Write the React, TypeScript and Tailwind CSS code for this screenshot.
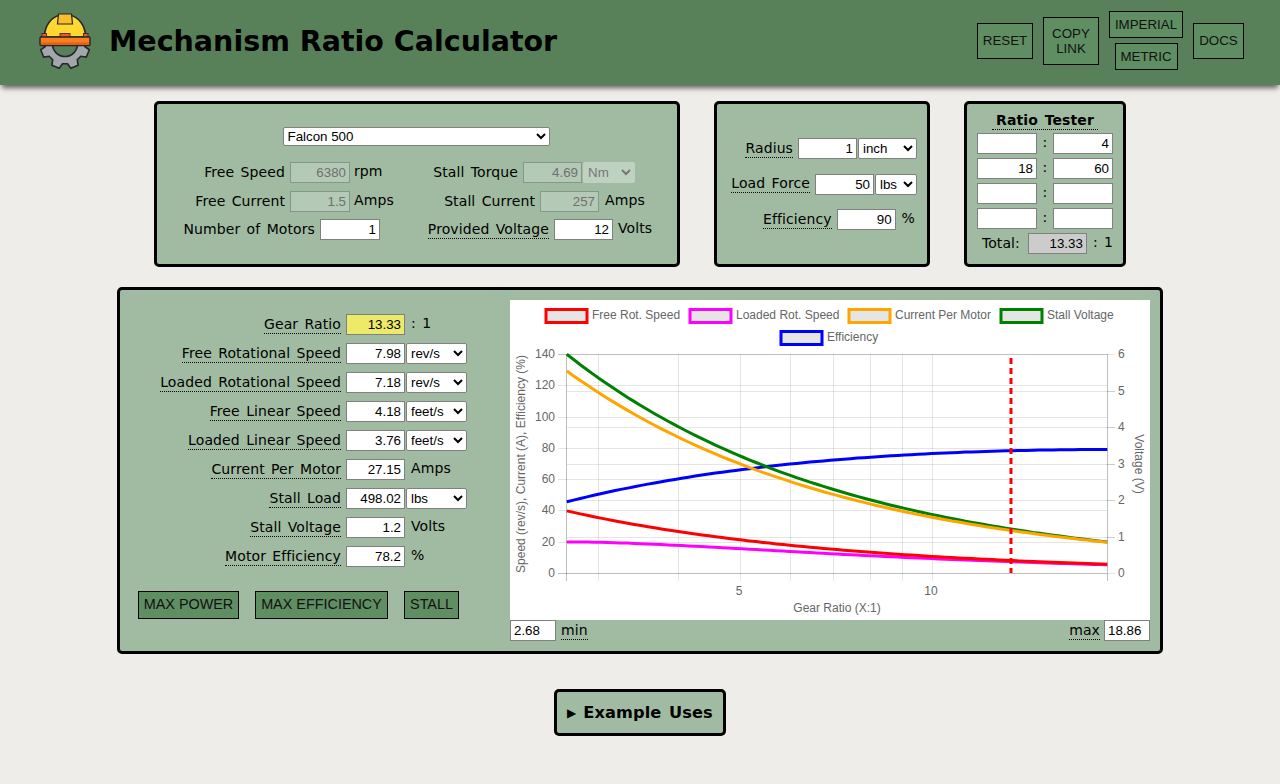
import React from "react";

const inputBase =
  "h-[21px] border border-[#808080] px-[3px] text-right font-['Liberation_Sans',Arial,sans-serif] text-[13.33px] text-black outline-none [word-spacing:0px] tracking-normal";
const selectBase =
  "h-[21px] rounded-[2px] border border-[#808080] bg-white font-['Liberation_Sans',Arial,sans-serif] text-[13.33px] text-black [word-spacing:0px] tracking-normal";
const panel = "rounded-[5px] border-[3px] border-black bg-[#a0bba2]";

function Num({ value = "", className = "w-[59px] bg-white" }: { value?: string; className?: string }) {
  return <input readOnly value={value} className={`${inputBase} ${className}`} />;
}
function Dis({ value, className = "w-[60px]" }: { value: string; className?: string }) {
  return (
    <input
      disabled
      value={value}
      className={`${inputBase} ${className} !border-[#84988a] bg-[#b4c9b6] !text-[#707070]`}
    />
  );
}
function Sel({ value, className }: { value: string; className: string }) {
  return (
    <select defaultValue={value} className={`${selectBase} ${className}`}>
      <option>{value}</option>
    </select>
  );
}
function Dotted({ children }: { children: React.ReactNode }) {
  return <span className="inline-block border-b border-dotted border-black leading-[17px]">{children}</span>;
}
function HBtn({ children, className = "" }: { children: React.ReactNode; className?: string }) {
  return (
    <button className={`border border-black bg-[#5f8e63] text-center font-['Liberation_Sans',Arial,sans-serif] text-[13.33px] leading-[15px] tracking-normal text-[#111] [word-spacing:0px] ${className}`}>
      {children}
    </button>
  );
}

function Logo() {
  const cx = 26;
  const cy = 31;
  const pts: string[] = [];
  const n = 8;
  for (let i = 0; i < n; i++) {
    const a = (i / n) * Math.PI * 2 + Math.PI / 8;
    const step = (Math.PI * 2) / n;
    const p = (r: number, t: number) => `${(cx + r * Math.cos(t)).toFixed(1)},${(cy + r * Math.sin(t)).toFixed(1)}`;
    pts.push(p(20, a - step * 0.34), p(25, a - step * 0.2), p(25, a + step * 0.2), p(20, a + step * 0.34));
  }
  const gear = `M${pts.join(" L")} Z M${cx + 12.500},${cy} A12.500,12.500 0 1,0 ${cx - 12.500},${cy} A12.500,12.500 0 1,0 ${cx + 12.500},${cy} Z`;
  return (
    <svg width="52" height="56" viewBox="0 0 52 56" className="shrink-0">
      <path d={gear} fillRule="evenodd" fill="#a4a6ad" stroke="#26262a" strokeWidth="1.6" />
      <rect x="2" y="0" width="48" height="24" fill="#58815a" />
      <path d="M5.500 24 C5.500 12 13 4 20 2.500 L32 2.500 C39 4 46.500 12 46.500 24 Z" fill="#ffd731" stroke="#26262a" strokeWidth="1.6" />
      <path d="M19.500 1 L32.500 1 L33.500 11 L18.500 11 Z" fill="#f9bd2e" stroke="#26262a" strokeWidth="1.2" />
      <rect x="3" y="20.500" width="4.500" height="4" fill="#f0552b" stroke="#26262a" strokeWidth="0.8" />
      <rect x="21" y="20.500" width="10" height="4" fill="#f0552b" stroke="#26262a" strokeWidth="0.8" />
      <rect x="44.500" y="20.500" width="4.500" height="4" fill="#f0552b" stroke="#26262a" strokeWidth="0.8" />
      <rect x="1" y="24" width="50" height="8.500" rx="1" fill="#f97f1d" stroke="#26262a" strokeWidth="1.4" />
      <rect x="2" y="29.500" width="48" height="2.200" fill="#e0621a" />
    </svg>
  );
}

const X = (g: number) => 56.8 + Math.log10(g / 2.68) * 637.8;
const YL = (v: number) => 273 - v * 1.5643;
const YR = (v: number) => 273 - v * 36.5;
const tq = (g: number) => 6.277 / g;
const cur = (g: number) => 1.5 + (255.5 * tq(g)) / 4.69;
const fns: { color: string; f: (g: number) => number }[] = [
  { color: "#0000ff", f: (g) => YL((90 * tq(g) * 668.1 * (1 - tq(g) / 4.69)) / (12 * cur(g))) },
  { color: "#008000", f: (g) => YR((12 * tq(g)) / 4.69) },
  { color: "#ffa500", f: (g) => YL(cur(g)) },
  { color: "#ff00ff", f: (g) => YL((106.33 / g) * (1 - tq(g) / 4.69)) },
  { color: "#ff0000", f: (g) => YL(106.33 / g) },
];
function curve(f: (g: number) => number) {
  const out: string[] = [];
  for (let i = 0; i <= 80; i++) {
    const g = 2.68 * Math.pow(18.86 / 2.68, i / 80);
    out.push(`${X(g).toFixed(1)},${f(g).toFixed(1)}`);
  }
  return out.join(" ");
}
const legend = [
  { x: 36, y: 9.5, c: "#ff0000", t: "Free Rot. Speed", tx: 82 },
  { x: 180, y: 9.5, c: "#ff00ff", t: "Loaded Rot. Speed", tx: 226 },
  { x: 339, y: 9.5, c: "#ffa500", t: "Current Per Motor", tx: 385 },
  { x: 491, y: 9.5, c: "#008000", t: "Stall Voltage", tx: 537 },
  { x: 271, y: 31.5, c: "#0000ff", t: "Efficiency", tx: 317 },
];

function Chart() {
  const grid = "rgba(0,0,0,0.1)";
  const axis = "rgba(0,0,0,0.25)";
  const font = { fontFamily: "'Liberation Sans',Arial,sans-serif", fontSize: 12, fill: "#666" };
  const xs = [3, 4, 5, 6, 7, 8, 9, 10];
  return (
    <svg width="640" height="320" viewBox="0 0 640 320" className="block bg-white tracking-normal [word-spacing:0px]">
      {legend.map((l) => (
        <g key={l.t}>
          <rect x={l.x} y={l.y} width={41} height={13} fill="#e5e5e5" stroke={l.c} strokeWidth={3} />
          <text x={l.tx} y={l.y + 9} {...font}>{l.t}</text>
        </g>
      ))}
      {[0, 20, 40, 60, 80, 100, 120, 140].map((v) => {
        const y = Math.round(YL(v)) + 0.5;
        return (
          <g key={v}>
            <line x1={48} x2={597} y1={y} y2={y} stroke={v === 0 || v === 140 ? axis : grid} />
            <text x={45} y={y + 3} textAnchor="end" {...font}>{v}</text>
          </g>
        );
      })}
      {[1, 2, 3, 4, 5].map((v) => {
        const y = Math.round(YR(v)) + 0.5;
        return <line key={v} x1={57} x2={605} y1={y} y2={y} stroke={grid} />;
      })}
      {[0, 1, 2, 3, 4, 5, 6].map((v) => {
        const y = Math.round(YR(v)) + 0.5;
        return (
          <g key={v}>
            <line x1={597} x2={605} y1={y} y2={y} stroke={grid} />
            <text x={608} y={y + 3} {...font}>{v}</text>
          </g>
        );
      })}
      {xs.map((g) => {
        const x = Math.round(X(g)) + 0.5;
        return <line key={g} x1={x} x2={x} y1={54} y2={281} stroke={grid} />;
      })}
      <line x1={56.5} x2={56.5} y1={54} y2={281} stroke={axis} />
      <line x1={597.500} x2={597.500} y1={54} y2={281} stroke={axis} />
      <text x={229} y={295} textAnchor="middle" {...font}>5</text>
      <text x={421} y={295} textAnchor="middle" {...font}>10</text>
      <text x={327} y={312} textAnchor="middle" {...font}>Gear Ratio (X:1)</text>
      <text x={0} y={0} textAnchor="middle" transform="translate(15 164) rotate(-90)" {...font}>Speed (rev/s), Current (A), Efficiency (%)</text>
      <text x={0} y={0} textAnchor="middle" transform="translate(625 164) rotate(90)" {...font}>Voltage (V)</text>
      {fns.map((s) => (
        <polyline key={s.color} points={curve(s.f)} fill="none" stroke={s.color} strokeWidth={3} />
      ))}
      <line x1={501} x2={501} y1={58} y2={273} stroke="#ff0000" strokeWidth={3} strokeDasharray="6 4" />
    </svg>
  );
}

const rows: { label: string; value: string; unit: string; sel?: boolean }[] = [
  { label: "Free Rotational Speed", value: "7.98", unit: "rev/s", sel: true },
  { label: "Loaded Rotational Speed", value: "7.18", unit: "rev/s", sel: true },
  { label: "Free Linear Speed", value: "4.18", unit: "feet/s", sel: true },
  { label: "Loaded Linear Speed", value: "3.76", unit: "feet/s", sel: true },
  { label: "Current Per Motor", value: "27.15", unit: "Amps" },
  { label: "Stall Load", value: "498.02", unit: "lbs", sel: true },
  { label: "Stall Voltage", value: "1.2", unit: "Volts" },
  { label: "Motor Efficiency", value: "78.2", unit: "%" },
];

const actionBtn =
  "h-[28px] border border-black bg-[#5f8e63] font-['Liberation_Sans',Arial,sans-serif] text-[14.4px] tracking-normal text-[#111] [word-spacing:0px]";

export default function App() {
  return (
    <div className="h-[784px] overflow-hidden bg-[#eeede9] font-['DejaVu_Sans',Verdana,sans-serif] text-[14px] tracking-[0.1px] text-black [word-spacing:1.8px]">
      <header className="flex h-[85px] items-center bg-[#58815a] pb-[4px] pl-[39px] pr-[36px] shadow-[0_5px_5px_-2px_rgba(0,0,0,0.6)]">
        <Logo />
        <h1 className="ml-[18px] mt-[4px] text-[28.5px] font-bold tracking-normal [word-spacing:0px]">Mechanism Ratio Calculator</h1>
        <div className="ml-auto flex items-center gap-[10px]">
          <HBtn className="h-[36px] w-[56px]">RESET</HBtn>
          <HBtn className="h-[48px] w-[56px]">COPY LINK</HBtn>
          <div className="flex flex-col items-center gap-[5px]">
            <HBtn className="h-[27px] w-[74px]">IMPERIAL</HBtn>
            <HBtn className="h-[27px] w-[63px]">METRIC</HBtn>
          </div>
          <HBtn className="h-[36px] w-[51px]">DOCS</HBtn>
        </div>
      </header>

      <div className="mt-[16px] flex justify-center gap-[34px]">
        <section className={`${panel} h-[166px] w-[526px] pt-[23px]`}>
          <div className="flex justify-center pr-[2px]">
            <Sel value="Falcon 500" className="!h-[19px] w-[267px]" />
          </div>
          <div className="mt-[16px] grid grid-cols-[263px_1fr] gap-y-[7.500px]">
            <div className="flex items-center">
              <span className="w-[128px] text-right">Free Speed</span>
              <Dis value="6380" className="ml-[5px] w-[60px]" />
              <span className="ml-[4px] -translate-y-px">rpm</span>
            </div>
            <div className="flex items-center">
              <span className="w-[98px] text-right">Stall Torque</span>
              <Dis value="4.69" className="ml-[5px] w-[59px]" />
              <select disabled defaultValue="Nm" className="ml-px h-[21px] w-[52px] rounded-[2px] border border-[#bfd1c0] bg-[#bfd1c0] font-['Liberation_Sans',Arial,sans-serif] text-[13.33px] text-[#777]">
                <option>Nm</option>
              </select>
            </div>
            <div className="flex items-center">
              <span className="w-[128px] text-right">Free Current</span>
              <Dis value="1.5" className="ml-[5px] w-[60px]" />
              <span className="ml-[4px] -translate-y-px">Amps</span>
            </div>
            <div className="flex items-center">
              <span className="w-[115px] text-right">Stall Current</span>
              <Dis value="257" className="ml-[5px] w-[59px]" />
              <span className="ml-[6px] -translate-y-px">Amps</span>
            </div>
            <div className="flex items-center">
              <span className="w-[158px] text-right">Number of Motors</span>
              <Num value="1" className="ml-[5px] w-[60px] bg-white" />
            </div>
            <div className="flex items-center">
              <span className="w-[129px] text-right"><Dotted>Provided Voltage</Dotted></span>
              <Num value="12" className="ml-[5px] w-[59px] bg-white" />
              <span className="ml-[5px] -translate-y-px">Volts</span>
            </div>
          </div>
        </section>

        <section className={`${panel} flex h-[166px] w-[216px] flex-col items-end gap-[14.500px] pr-[10px] pt-[34px]`}>
          <div className="flex items-center gap-[5px]">
            <Dotted>Radius</Dotted>
            <Num value="1" />
            <Sel value="inch" className="-ml-[4px] w-[59px]" />
          </div>
          <div className="flex items-center gap-[5px]">
            <Dotted>Load Force</Dotted>
            <Num value="50" />
            <Sel value="lbs" className="-ml-[4px] w-[42px]" />
          </div>
          <div className="flex items-center gap-[5px] pr-[2px]">
            <Dotted>Efficiency</Dotted>
            <Num value="90" />
            <span className="ml-px -translate-y-px">%</span>
          </div>
        </section>

        <section className={`${panel} flex h-[166px] w-[162px] flex-col items-center pt-[8px]`}>
          <span className="inline-block border-b border-dotted border-black px-[4px] text-[14px] font-bold leading-[17px]">Ratio Tester</span>
          <div className="mt-[3px] flex flex-col gap-[4px]">
            {[["", "4"], ["18", "60"], ["", ""], ["", ""]].map((r, i) => (
              <div key={i} className="flex items-center">
                <Num value={r[0]} className="w-[60px] bg-white" />
                <span className="w-[16px] -translate-y-px text-center">:</span>
                <Num value={r[1]} className="w-[60px] bg-white" />
              </div>
            ))}
          </div>
          <div className="mt-[4px] flex items-center pl-[5px]">
            <span className="w-[46px]">Total:</span>
            <Num value="13.33" className="w-[59px] bg-[#cccccc]" />
            <span className="ml-[6px] -translate-y-px">: 1</span>
          </div>
        </section>
      </div>

      <section className={`${panel} mx-auto mt-[20px] flex h-[367px] w-[1046px]`}>
        <div className="w-[390px] pt-[24px]">
          <div className="flex flex-col gap-[8px]">
            <div className="flex h-[21px] items-center">
              <span className="w-[221px] text-right"><Dotted>Gear Ratio</Dotted></span>
              <Num value="13.33" className="ml-[5px] w-[59px] bg-[#edea69]" />
              <span className="ml-[6px] -translate-y-px">: 1</span>
            </div>
            {rows.map((r) => (
              <div key={r.label} className="flex h-[21px] items-center">
                <span className="w-[221px] text-right"><Dotted>{r.label}</Dotted></span>
                <Num value={r.value} className="ml-[5px] w-[59px] bg-white" />
                {r.sel ? (
                  <Sel value={r.unit} className="ml-px w-[61px]" />
                ) : (
                  <span className="ml-[6px] -translate-y-px">{r.unit}</span>
                )}
              </div>
            ))}
          </div>
          <div className="ml-[18px] mt-[24px] flex gap-[16px]">
            <button className={`${actionBtn} w-[101px]`}>MAX POWER</button>
            <button className={`${actionBtn} w-[133px]`}>MAX EFFICIENCY</button>
            <button className={`${actionBtn} w-[55px]`}>STALL</button>
          </div>
        </div>
        <div className="w-[640px] pt-[10px]">
          <Chart />
          <div className="flex items-center justify-between">
            <div className="flex items-center gap-[5px]">
              <input readOnly value="2.68" className="h-[21px] w-[46px] border border-[#808080] bg-white px-[3px] font-['Liberation_Sans',Arial,sans-serif] text-[13.33px] tracking-normal outline-none" />
              <Dotted>min</Dotted>
            </div>
            <div className="flex items-center gap-[4px]">
              <Dotted>max</Dotted>
              <input readOnly value="18.86" className="h-[21px] w-[46px] border border-[#808080] bg-white px-[3px] font-['Liberation_Sans',Arial,sans-serif] text-[13.33px] tracking-normal outline-none" />
            </div>
          </div>
        </div>
      </section>

      <div className="mt-[35px] flex justify-center">
        <div className={`${panel} flex h-[47px] w-[172px] items-center pl-[10px] pt-[2px] text-[16.2px] font-bold`}>
          <span className="mr-[7px] -translate-y-px text-[12px]">▶</span>Example Uses
        </div>
      </div>
    </div>
  );
}
